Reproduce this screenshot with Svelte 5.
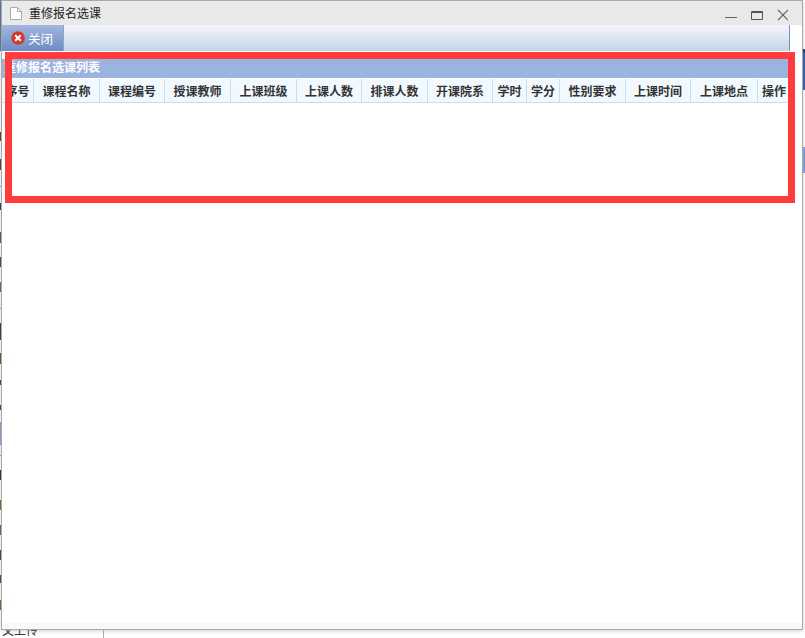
<script lang="ts">
  const columns = [
    { name: '序号', width: 32 },
    { name: '课程名称', width: 66 },
    { name: '课程编号', width: 65 },
    { name: '授课教师', width: 66 },
    { name: '上课班级', width: 66 },
    { name: '上课人数', width: 65 },
    { name: '排课人数', width: 66 },
    { name: '开课院系', width: 65 },
    { name: '学时', width: 34 },
    { name: '学分', width: 33 },
    { name: '性别要求', width: 66 },
    { name: '上课时间', width: 65 },
    { name: '上课地点', width: 67 },
    { name: '操作', width: 33 }
  ];

  // slivers of the page behind the dialog, visible left of its edge
  const slivers = [
    { gap: 0, h: 51, color: '#5d79ad' },
    { gap: 81, h: 9, color: '#6b4a33' },
    { gap: 18, h: 11, color: '#5b4636' },
    { gap: 16, h: 1, color: '#8fb4e6' },
    { gap: 16, h: 7, color: '#444' },
    { gap: 22, h: 11, color: '#7a5a3c' },
    { gap: 14, h: 10, color: '#6b4a33' },
    { gap: 15, h: 10, color: '#8a6a3c' },
    { gap: 16, h: 1, color: '#8fb4e6' },
    { gap: 14, h: 17, color: '#444' },
    { gap: 13, h: 11, color: '#7a5a3c' },
    { gap: 16, h: 5, color: '#6b4a33' },
    { gap: 20, h: 5, color: '#6b4a33' },
    { gap: 12, h: 23, color: '#8aa5d0' },
    { gap: 10, h: 1, color: '#8fb4e6' },
    { gap: 14, h: 10, color: '#4a3526' },
    { gap: 20, h: 10, color: '#8a6a3c' },
    { gap: 15, h: 10, color: '#8a6a3c' },
    { gap: 15, h: 10, color: '#6b4a33' },
    { gap: 15, h: 8, color: '#6b4a33' },
    { gap: 17, h: 10, color: '#8a6a3c' }
  ];
</script>

<div class="page">
  <div class="left-strip">
    {#each slivers as s}
      <span class="sliver" style="margin-top: {s.gap}px; height: {s.h}px; background: {s.color}"></span>
    {/each}
  </div>

  <div class="window">
    <div class="titlebar">
      <svg class="file-icon" width="12" height="13" viewBox="0 0 12 13">
        <path d="M.5 .5h7l4 4v8h-11z" fill="#fff" stroke="#a9a9a9" />
        <path d="M7.500 .5v4h4" fill="none" stroke="#a9a9a9" />
      </svg>
      <span class="title">重修报名选课</span>
      <div class="controls">
        <svg width="12" height="12" viewBox="0 0 12 12"><path d="M0 8.500h12" stroke="#666" /></svg>
        <svg width="12" height="12" viewBox="0 0 12 12"><path d="M.5 2.500h11v8h-11z M.5 3.500h11" fill="none" stroke="#555" /></svg>
        <svg width="12" height="12" viewBox="0 0 12 12"><path d="M2 1l10 10M12 1L2 11" stroke="#666" stroke-width="1.100" /></svg>
      </div>
    </div>

    <div class="body">
      <div class="toolbar">
        <button class="close-btn" type="button">
          <svg width="14" height="14" viewBox="0 0 14 14">
            <circle cx="7" cy="7" r="6.800" fill="#d43a2c" />
            <path d="M4.200 4.200l5.600 5.600M9.800 4.200l-5.600 5.600" stroke="#fff" stroke-width="2" />
          </svg>
          <span>关闭</span>
        </button>
      </div>

      <div class="panel">
        <div class="panel-title">重修报名选课列表</div>
        <div class="thead">
          {#each columns as col}
            <div class="th" style="width: {col.width}px">{col.name}</div>
          {/each}
        </div>
      </div>
    </div>
    <div class="foot"></div>
  </div>

  <div class="right-strip">
    <div class="r-gap"></div>
    <div class="r-dark"></div>
    <div class="r-gap mid"></div>
    <div class="r-blue"></div>
  </div>

  <div class="bottom-strip">
    <span class="upload">文上传</span>
    <span class="side-line"></span>
  </div>

  <div class="highlight"></div>
</div>

<style>
  :global(body) {
    margin: 0;
    background: #fff;
  }

  .page {
    position: relative;
    width: 805px;
    height: 638px;
    overflow: hidden;
    display: grid;
    grid-template-columns: 1px 802px 2px;
    grid-template-rows: 630px 8px;
    font-family: 'Noto Sans CJK SC', 'Liberation Sans', sans-serif;
  }

  .left-strip {
    display: flex;
    flex-direction: column;
    overflow: hidden;
  }

  .sliver {
    flex-shrink: 0;
    display: block;
    width: 1px;
  }

  .window {
    display: flex;
    flex-direction: column;
    border: 1px solid #a9a9a9;
    box-sizing: border-box;
    background: #fff;
    box-shadow: 0 1px 4px rgba(0, 0, 0, 0.18);
  }

  .titlebar {
    height: 24px;
    flex-shrink: 0;
    background: #e9e9e9;
    display: flex;
    align-items: center;
    padding-left: 8px;
  }

  .title {
    margin-left: 7px;
    margin-top: -2px;
    font-size: 12px;
    color: #222;
  }

  .controls {
    margin-left: auto;
    display: flex;
    gap: 14px;
    padding-top: 4px;
    padding-right: 14px;
  }

  .controls svg:last-child {
    margin-left: -1px;
  }

  .body {
    flex: 1;
    width: 788px;
  }

  .toolbar {
    height: 26px;
    background: linear-gradient(#f4f5fd, #c3d5e8);
    border-right: 1px solid #7591c2;
    box-sizing: border-box;
  }

  .close-btn {
    height: 26px;
    width: 62px;
    padding: 0 0 0 9px;
    border: none;
    border-right: 1px solid #8aa3cf;
    background: linear-gradient(#a3b7e0, #6c8cc3);
    display: flex;
    align-items: center;
    gap: 3px;
    color: #fff;
    font-family: inherit;
    font-size: 12.500px;
  }

  .panel {
    padding-top: 8px;
  }

  .panel-title {
    height: 19px;
    line-height: 15px;
    padding-left: 2px;
    background: #9ab3df;
    color: #fff;
    font-size: 12px;
    font-weight: 700;
  }

  .thead {
    display: flex;
    margin-top: 1px;
    height: 24px;
    background: #f1f9fe;
    border-bottom: 1px solid #bfe0f5;
    box-sizing: border-box;
  }

  .th {
    flex-shrink: 0;
    box-sizing: border-box;
    border-right: 1px solid #bfe0f5;
    text-align: center;
    font-size: 12px;
    font-weight: 700;
    line-height: 23px;
    color: #333;
  }

  .foot {
    height: 6px;
    flex-shrink: 0;
    background: #f9f9f9;
  }

  .right-strip {
    display: flex;
    flex-direction: column;
  }

  .r-gap {
    height: 49px;
  }

  .r-gap.mid {
    height: 57px;
  }

  .r-dark {
    height: 41px;
    background: linear-gradient(#2b3f8f 4px, #3563b0 4px);
  }

  .r-blue {
    height: 26px;
    background: #7c9dd0;
  }

  .bottom-strip {
    grid-column: 1 / -1;
    position: relative;
    display: flex;
    overflow: hidden;
  }

  .upload {
    margin-top: -7px;
    margin-left: 2px;
    font-size: 12px;
    line-height: 14px;
    color: #333;
  }

  .side-line {
    position: absolute;
    left: 103px;
    top: 0;
    bottom: 0;
    width: 1px;
    background: #8fb0d8;
  }

  /* annotation drawn over the screenshot */
  .highlight {
    position: absolute;
    left: 5px;
    top: 52px;
    width: 790px;
    height: 151px;
    box-sizing: border-box;
    border: 7px solid #ff3b3b;
  }
</style>
